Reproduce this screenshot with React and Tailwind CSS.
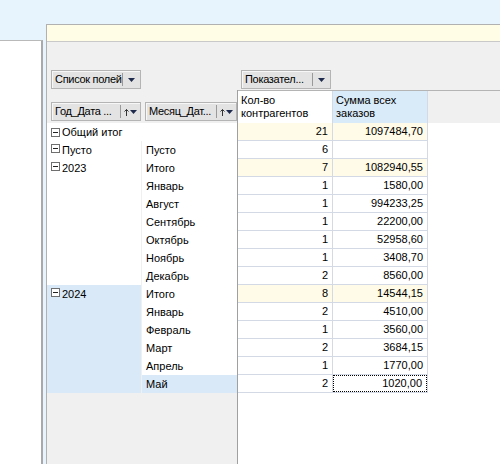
import React from 'react';

const rows = [
  { c1: 'Общий итог', both: true, v1: '21', v2: '1097484,70', total: true },
  { c1: 'Пусто', c2: 'Пусто', v1: '6', v2: '' },
  { c1: '2023', span: 7, c2: 'Итого', v1: '7', v2: '1082940,55', total: true },
  { c2: 'Январь', v1: '1', v2: '1580,00' },
  { c2: 'Август', v1: '1', v2: '994233,25' },
  { c2: 'Сентябрь', v1: '1', v2: '22200,00' },
  { c2: 'Октябрь', v1: '1', v2: '52958,60' },
  { c2: 'Ноябрь', v1: '1', v2: '3408,70' },
  { c2: 'Декабрь', v1: '2', v2: '8560,00' },
  { c1: '2024', span: 6, c2: 'Итого', v1: '8', v2: '14544,15', total: true },
  { c2: 'Январь', v1: '2', v2: '4510,00' },
  { c2: 'Февраль', v1: '1', v2: '3560,00' },
  { c2: 'Март', v1: '2', v2: '3684,15' },
  { c2: 'Апрель', v1: '1', v2: '1770,00' },
  { c2: 'Май', v1: '2', v2: '1020,00', focus: true },
];

const Arrow = () => (
  <svg width="7" height="4" viewBox="0 0 7 4">
    <polygon points="0,0 7,0 3.5,4" fill="#1f2b4d" />
  </svg>
);

const SortArrow = () => (
  <svg width="5" height="8" viewBox="0 0 5 8">
    <path d="M2.5 1.5V8M0.5 3.5L2.5 1.5L4.5 3.5" stroke="#333" strokeWidth="1" fill="none" />
  </svg>
);

const Minus = () => (
  <span className="w-[9px] h-[9px] border border-[#6f6f6f] bg-white flex items-center justify-center mr-[2px] shrink-0">
    <span className="w-[5px] h-px bg-[#222]" />
  </span>
);

// field button in the pivot header
const FieldBtn = ({ label, width, sort }) => (
  <div className={`h-[19px] ${width} flex items-stretch bg-[#e3e3e3] border border-[#b4b4b4] shadow-[inset_1px_1px_0_#f7f7f7]`}>
    <div className="flex-1 flex items-center pl-[3px] tracking-[-0.3px] text-black whitespace-nowrap overflow-hidden">{label}</div>
    <div className="w-px my-[2px] bg-[#9a9a9a]" />
    <div className={`flex items-center justify-center gap-[1px] ${sort ? 'px-[3px]' : 'px-[5px]'}`}>
      {sort && <SortArrow />}
      <Arrow />
    </div>
  </div>
);

export default function App() {
  return (
    <div className="w-[500px] h-[464px] overflow-hidden bg-[#e8f4fd] flex text-[11px] leading-[13px] text-black font-['Liberation_Sans',Arial,sans-serif]">
      {/* left side panel */}
      <div className="w-[43px] mt-[40px] bg-white border-t border-[#b9b9b9] border-r-2 border-r-[#a9a9a9] shrink-0" />

      {/* pivot grid */}
      <div className="ml-[3px] mt-[24px] flex-1 flex flex-col border-l border-t border-[#b1b1b1] min-w-0">
        <div className="h-[17px] bg-[#fffde6] border-b border-[#c9c9c9] shrink-0" />

        <div className="flex-1 flex bg-[#f0f0f0] min-h-0">
          {/* row area */}
          <div className="w-[191px] flex flex-col shrink-0">
            <div className="h-[48px] pt-[28px] pl-[4px]">
              <FieldBtn label="Список полей" width="w-[90px]" />
            </div>
            <div className="h-[33px] pt-[12px] pl-[4px] flex gap-[4px] border-r border-[#a0a0a0]">
              <FieldBtn label="Год_Дата ..." width="w-[90px]" sort />
              <FieldBtn label="Месяц_Дат..." width="w-[92px]" sort />
            </div>
            <div className="grid grid-cols-[95px_95px] auto-rows-[18px] bg-white border-r border-[#a0a0a0]">
              {rows.map((r, i) => (
                <React.Fragment key={i}>
                  {r.both && (
                    <div className="col-span-2 flex items-center pl-[4px]">
                      <Minus />
                      {r.c1}
                    </div>
                  )}
                  {!r.both && r.c1 && (
                    <div
                      className={`col-start-1 flex items-start pt-[3px] pl-[4px] border-r border-[#f0f0f0] ${r.span === 7 ? 'row-span-7' : ''} ${r.span === 6 ? 'row-span-6 bg-[#d9e9f8]' : ''}`}
                    >
                      <Minus />
                      {r.c1}
                    </div>
                  )}
                  {!r.both && (
                    <div className={`col-start-2 flex items-center pl-[4px] ${r.focus ? 'bg-[#d9e9f8]' : ''}`}>{r.c2}</div>
                  )}
                </React.Fragment>
              ))}
            </div>
            <div className="flex-1 border-r border-[#a0a0a0]" />
          </div>

          {/* data area */}
          <div className="flex-1 flex flex-col min-w-0">
            <div className="h-[48px] pt-[28px] pl-[3px]">
              <FieldBtn label="Показател..." width="w-[90px]" />
            </div>
            <div className="h-[33px] flex border-t border-[#b4b4b4]">
              <div className="w-[95px] bg-white border-r border-[#d3dae6] pl-[3px] pt-[3px]">
                Кол-во
                <br />
                контрагентов
              </div>
              <div className="w-[95px] bg-[#d9eaf8] border-r border-[#d3dae6] pl-[3px] pt-[3px]">
                Сумма всех
                <br />
                заказов
              </div>
            </div>
            <div className="flex-1 bg-white">
              {rows.map((r, i) => (
                <div key={i} className="h-[18px] flex">
                  <div className={`w-[95px] border-r border-b border-[#d3dae6] flex items-center justify-end pr-[4px] ${r.total ? 'bg-[#fffbe8]' : ''}`}>{r.v1}</div>
                  <div className={`w-[95px] border-r border-b border-[#d3dae6] flex items-stretch ${r.total ? 'bg-[#fffbe8]' : ''}`}>
                    <div className={`flex-1 flex items-center justify-end pr-[4px] ${r.focus ? 'border border-dotted border-black' : ''}`}>{r.v2}</div>
                  </div>
                </div>
              ))}
            </div>
          </div>
        </div>
      </div>
    </div>
  );
}
